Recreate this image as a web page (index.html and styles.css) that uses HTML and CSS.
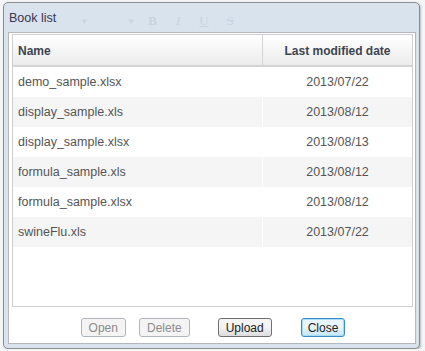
FILE: index.html
```html
<!DOCTYPE html>
<html lang="en">
<head>
	<meta charset="UTF-8">
	<title>Book list</title>
	<link rel="stylesheet" href="styles.css">
</head>
<body>
	<div id="dialog">
		<div class="title">
			<span class="caption">Book list</span>
			<span class="ghost">
				<span class="g-arrow">&#9662;</span>
				<span class="g-arrow g2">&#9662;</span>
				<b class="g-b">B</b>
				<i class="g-i">I</i>
				<u class="g-u">U</u>
				<s class="g-s">S</s>
			</span>
		</div>
		<div class="panel">
			<div class="grid">
				<table>
					<thead>
						<tr>
							<th class="name">Name</th>
							<th class="date">Last modified date</th>
						</tr>
					</thead>
					<tbody>
						<tr><td class="name">demo_sample.xlsx</td><td class="date">2013/07/22</td></tr>
						<tr><td class="name">display_sample.xls</td><td class="date">2013/08/12</td></tr>
						<tr><td class="name">display_sample.xlsx</td><td class="date">2013/08/13</td></tr>
						<tr><td class="name">formula_sample.xls</td><td class="date">2013/08/12</td></tr>
						<tr><td class="name">formula_sample.xlsx</td><td class="date">2013/08/12</td></tr>
						<tr><td class="name">swineFlu.xls</td><td class="date">2013/07/22</td></tr>
					</tbody>
				</table>
			</div>
			<div class="buttons">
				<button class="btn open" disabled>Open</button>
				<button class="btn delete" disabled>Delete</button>
				<button class="btn upload">Upload</button>
				<button class="btn close">Close</button>
			</div>
		</div>
	</div>
</body>
</html>
```

FILE: styles.css
```css
/*css reset*/
html,body,div,table,th,td{
	padding: 0;
	margin: 0;
}
body{
	background: #f4f5f6;
	font: 12px/14px "Liberation Sans", Arial, sans-serif;
	color: #555;
}

/*dialog*/
#dialog{
	width: 408px;
	height: 345px;
	margin: 2px 0 0 3px;
	padding: 0 3px 0 4px;
	background: #d8e3ed;
	border: 1px solid #8c8c8c;
	border-radius: 5px;
	box-shadow: 1px 1px 2px rgba(0,0,0,.25);
	display: flex;
	flex-direction: column;
}
.title{
	height: 29px;
	flex: none;
	display: flex;
	align-items: center;
	padding-left: 1px;
}
.caption{
	color: #3a3550;
	font-size: 12.5px;
}
.ghost{
	display: flex;
	align-items: center;
	padding-top: 6px;
	color: #c9d4de;
	font: bold 13px "Liberation Serif", serif;
}
.g-arrow{font: 9px sans-serif; margin-left: 26px;}
.g-arrow.g2{margin-left: 42px;}
.g-b{margin-left: 14px;}
.g-i{margin-left: 19px; font-weight: normal;}
.g-u{margin-left: 19px; font-weight: normal;}
.g-s{margin-left: 18px; font-weight: normal;}

.panel{
	height: 309px;
	flex: none;
	background: #fff;
	border: 1px solid #b4b8bc;
	padding: 1px 2px 0 3px;
	display: flex;
	flex-direction: column;
}
.grid{
	height: 271px;
	flex: none;
	border: 1px solid #cfcfcf;
}
table{
	width: 100%;
	border-collapse: collapse;
}
th{
	height: 29px;
	padding-top: 1px;
	background: linear-gradient(#fff, #ececec);
	border-bottom: 2px solid #d4d4d4;
	color: #3c4450;
	font-weight: bold;
	font-size: 12px;
}
th.name{
	text-align: left;
	padding-left: 5px;
	border-right: 1px solid #d4d4d4;
}
th.date{width: 149px; text-align: center;}
td{
	height: 30px;
	font-size: 12.5px;
	color: #555;
}
td.name{padding-left: 5px;}
td.date{
	text-align: center;
	border-left: 1px solid #fff;
}
tbody tr:nth-child(even) td{background: #f5f5f5;}

/*buttons*/
.buttons{
	display: flex;
	justify-content: center;
	padding: 11px 0 0 1px;
}
.btn{
	height: 19px;
	padding: 0 7px;
	font: 12px "Liberation Sans", Arial, sans-serif;
	color: #222;
	background: linear-gradient(#f4f4f4 45%, #dcdcdc);
	border: 1px solid #707070;
	border-radius: 3px;
}
.btn[disabled]{
	color: #8c8c8c;
	border-color: #b2b6ba;
	background: #f4f4f4;
}
.open{margin-right: 13px;}
.delete{margin-right: 28px;}
.upload{margin-right: 29px;}
.close{
	padding: 0 6px;
	border-color: #3c8cc4;
	background: linear-gradient(#eaf6fd 45%, #c4e5f6);
	box-shadow: inset 0 0 0 1px #a8dcf5;
}
```
